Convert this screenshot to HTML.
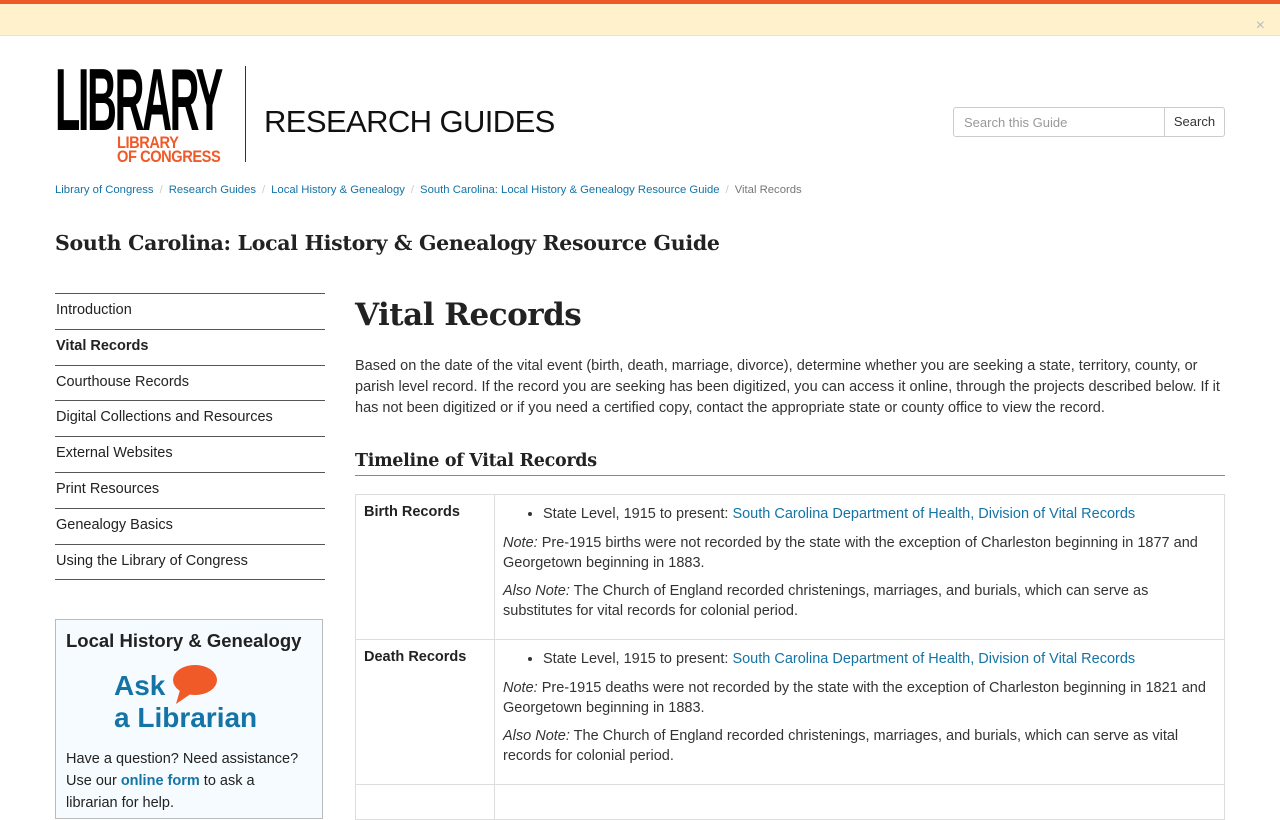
<!DOCTYPE html>
<html><head><meta charset="utf-8"><style>
*{box-sizing:border-box}
body{margin:0;width:1280px;height:800px;overflow:hidden;background:#fff;font-family:"Liberation Sans",sans-serif;color:#222;}
a{color:#1474a6;text-decoration:none}
.topbar{height:4px;background:#f05a28}
.banner{height:32px;background:#fff1cc;border-bottom:1px solid #f3e2a8;position:relative}
.banner span{position:absolute;right:15px;top:14px;color:#bbb;font-size:16px;line-height:16px}
.logo{position:absolute;left:55px;top:66px}
.lib{font-family:"Liberation Sans",sans-serif;font-weight:bold;font-size:88px;line-height:68px;letter-spacing:-5px;transform:scaleX(.47);transform-origin:0 0;color:#000;width:340px;height:68px;white-space:nowrap}
.loc{position:absolute;left:62px;top:70px;color:#f05a28;font-weight:bold;font-size:17px;line-height:14px;letter-spacing:-.5px;transform:scaleX(.86);transform-origin:0 0;white-space:nowrap}
.vline{position:absolute;left:245px;top:66px;width:1px;height:96px;background:#333}
.rg{position:absolute;left:264px;top:104px;font-size:31px;color:#111;letter-spacing:-.6px;font-weight:normal;white-space:nowrap}
.search{position:absolute;left:953px;top:107px;width:272px;height:30px;border:1px solid #ccc;border-radius:3px;font-size:13px}
.search .in{position:absolute;left:10px;top:7px;color:#999}
.search .bt{position:absolute;right:0;top:0;width:60px;height:28px;border-left:1px solid #ccc;text-align:center;line-height:28px;color:#333}
.bc{position:absolute;left:55px;top:184px;font-size:11.3px;color:#777;white-space:nowrap}
.bc a{color:#1474a6}.bc i{font-style:normal;color:#ccc;margin:0 6px}
h1.g{position:absolute;left:55px;top:231px;margin:0;font-family:"DejaVu Serif",serif;font-size:20.5px;font-weight:bold;color:#222;letter-spacing:-.3px;white-space:nowrap}
.nav{position:absolute;left:55px;top:293px;width:270px;border-top:1px solid #555}
.nav div{height:35.8px;border-bottom:1px solid #555;padding-left:1px;line-height:33px;font-size:14.5px;color:#222}
.box{position:absolute;left:55px;top:619px;width:268px;height:200px;border:1px solid #bbb;background:#f5fbfe;padding:10px 10px}
.box h3{margin:0;font-size:18.5px;font-weight:bold;color:#222}
.ask{position:absolute;left:58px;top:50px;color:#1474a6;font-weight:bold;font-size:28px;line-height:32px}
.box p{position:absolute;left:10px;top:128px;margin:0;font-size:14.5px;line-height:22px;width:240px}
.main{position:absolute;left:355px;top:290px;width:870px}
.main h1{margin:0;font-family:"DejaVu Serif",serif;font-size:31px;font-weight:bold;color:#222;line-height:50px;letter-spacing:-.5px}
.main p.i{margin:16px 0 0;font-size:14.5px;line-height:21px;color:#333}
.main h2{margin:32px 0 0;font-family:"DejaVu Serif",serif;font-size:17.5px;font-weight:bold;color:#222;padding-bottom:4px;border-bottom:1px solid #888;letter-spacing:-.3px}
table{border-collapse:collapse;margin-top:18px;width:870px;font-size:14.5px;color:#333}
td{border:1px solid #ddd;vertical-align:top;padding:9px 8px}
td.h{width:139px;font-weight:bold;color:#222}
td ul{margin:0;padding-left:40px;line-height:21px}
td p{margin:8px 0 0;line-height:20px}
</style></head><body>
<div class="topbar"></div>
<div class="banner"><span>×</span></div>
<div class="logo"><div class="lib">LIBRARY</div><div class="loc">LIBRARY<br>OF CONGRESS</div></div>
<div class="vline"></div>
<div class="rg">RESEARCH GUIDES</div>
<div class="search"><span class="in">Search this Guide</span><span class="bt">Search</span></div>
<div class="bc"><a>Library of Congress</a><i>/</i><a>Research Guides</a><i>/</i><a>Local History &amp; Genealogy</a><i>/</i><a>South Carolina: Local History &amp; Genealogy Resource Guide</a><i>/</i>Vital Records</div>
<h1 class="g">South Carolina: Local History &amp; Genealogy Resource Guide</h1>
<div class="nav"><div>Introduction</div><div style="font-weight:bold">Vital Records</div><div>Courthouse Records</div><div>Digital Collections and Resources</div><div>External Websites</div><div>Print Resources</div><div>Genealogy Basics</div><div>Using the Library of Congress</div></div>
<div class="box"><h3>Local History &amp; Genealogy</h3>
<div class="ask">Ask<br>a Librarian</div>
<svg style="position:absolute;left:116px;top:44px" width="46" height="42" viewBox="0 0 46 42"><ellipse cx="23" cy="16" rx="22" ry="15" fill="#f05a28"/><path d="M8 26 L4 40 L20 29 Z" fill="#f05a28"/></svg>
<p>Have a question? Need assistance? Use our <a style="font-weight:bold">online form</a> to ask a librarian for help.</p></div>
<div class="main">
<h1>Vital Records</h1>
<p class="i">Based on the date of the vital event (birth, death, marriage, divorce), determine whether you are seeking a state, territory, county, or parish level record. If the record you are seeking has been digitized, you can access it online, through the projects described below. If it has not been digitized or if you need a certified copy, contact the appropriate state or county office to view the record.</p>
<h2>Timeline of Vital Records</h2>
<table>
<tr><td class="h">Birth Records</td><td><ul><li>State Level, 1915 to present: <a>South Carolina Department of Health, Division of Vital Records</a></li></ul><p><i>Note:</i> Pre-1915 births were not recorded by the state with the exception of Charleston beginning in 1877 and Georgetown beginning in 1883.</p><p style="margin-bottom:9px"><i>Also Note:</i> The Church of England recorded christenings, marriages, and burials, which can serve as substitutes for vital records for colonial period.</p></td></tr>
<tr><td class="h">Death Records</td><td><ul><li>State Level, 1915 to present: <a>South Carolina Department of Health, Division of Vital Records</a></li></ul><p><i>Note:</i> Pre-1915 deaths were not recorded by the state with the exception of Charleston beginning in 1821 and Georgetown beginning in 1883.</p><p style="margin-bottom:9px"><i>Also Note:</i> The Church of England recorded christenings, marriages, and burials, which can serve as vital records for colonial period.</p></td></tr>
<tr><td class="h">&nbsp;</td><td>&nbsp;</td></tr>
</table>
</div>
</body></html>
